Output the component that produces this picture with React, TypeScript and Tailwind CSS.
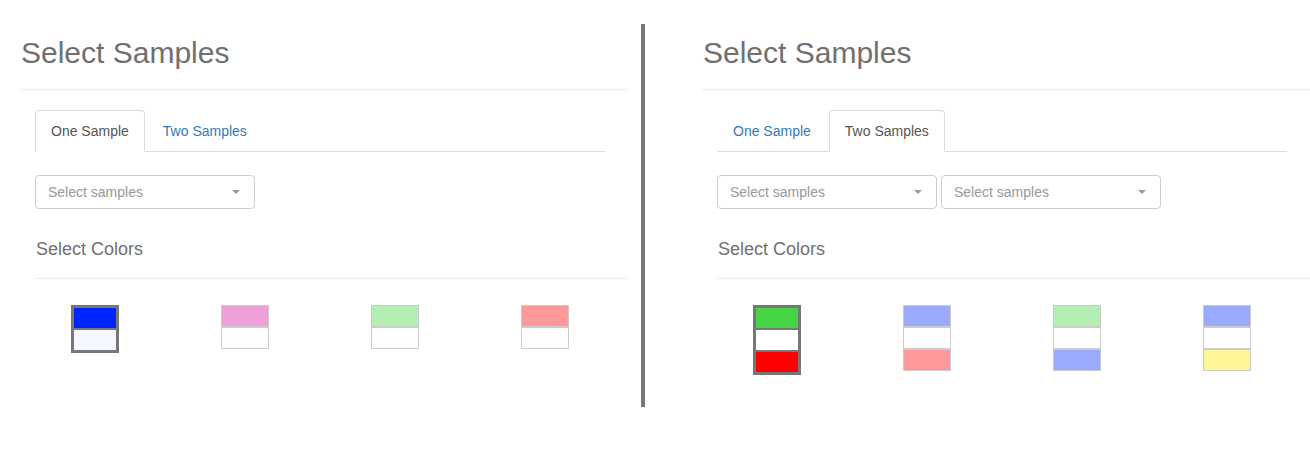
import { useState } from "react"

type Swatch = { colors: string[]; selected?: boolean }

const oneSampleSwatches: Swatch[] = [
  { colors: ["#0026ff", "#f5f7ff"], selected: true },
  { colors: ["#f0a0d8", "#fefcfe"] },
  { colors: ["#b3eeb3", "#fbfefb"] },
  { colors: ["#ff9999", "#fffcfc"] },
]

const twoSampleSwatches: Swatch[] = [
  { colors: ["#44d444", "#ffffff", "#ff0000"], selected: true },
  { colors: ["#99aaff", "#ffffff", "#ff9999"] },
  { colors: ["#b3eeb3", "#ffffff", "#99aaff"] },
  { colors: ["#99aaff", "#ffffff", "#fff599"] },
]

function SampleSelect() {
  return (
    <div className="flex h-[34px] w-[220px] items-center justify-between rounded-[4px] border border-[#ccc] bg-white pl-[12px] pr-[14px] text-[14px] text-[#999]">
      <span>Select samples</span>
      {/* caret */}
      <span className="h-0 w-0 border-x-[4px] border-t-[4px] border-x-transparent border-t-[#999]" />
    </div>
  )
}

function ColorSwatch({ swatch }: { swatch: Swatch }) {
  return (
    <div
      className={`flex w-[48px] flex-col gap-[2px] ${
        swatch.selected ? "border-[3px] border-[#777] bg-[#777]" : "border border-[#ccc] bg-[#ccc]"
      }`}
    >
      {swatch.colors.map((c, i) => (
        <div key={i} className="h-[20px]" style={{ backgroundColor: c }} />
      ))}
    </div>
  )
}

function Panel({ initialTab }: { initialTab: "one" | "two" }) {
  const [tab, setTab] = useState(initialTab)
  const swatches = tab === "one" ? oneSampleSwatches : twoSampleSwatches

  return (
    <div className="flex flex-col">
      <h2 className="ml-px mt-[36px] text-[30px] leading-[33px] text-[#707070]">Select Samples</h2>
      <div className="mt-[20px] border-t border-[#eee]" />

      {/* Tabs */}
      <ul className="ml-[15px] mt-[20px] flex w-[570px] gap-[2px] border-b border-[#ddd] text-[14px] leading-[20px]">
        {[
          { id: "one" as const, label: "One Sample" },
          { id: "two" as const, label: "Two Samples" },
        ].map((t) => (
          <li key={t.id} className="-mb-px">
            <button
              onClick={() => setTab(t.id)}
              className={`rounded-t-[4px] border px-[15px] py-[10px] ${
                tab === t.id
                  ? "border-[#ddd] border-b-transparent bg-white text-[#555]"
                  : "border-transparent text-[#337ab7]"
              }`}
            >
              {t.label}
            </button>
          </li>
        ))}
      </ul>

      <div className="ml-[15px] mt-[23px] flex gap-[4px]">
        <SampleSelect />
        {tab === "two" && <SampleSelect />}
      </div>

      <h3 className="ml-[16px] mt-[30px] text-[18px] leading-[20px] text-[#707070]">Select Colors</h3>
      <div className="ml-[15px] mt-[19px] border-t border-[#eee]" />

      <div className="mt-[26px] flex items-start">
        {swatches.map((s, i) => (
          <div key={i} className="flex w-[150px] items-start justify-center">
            <ColorSwatch swatch={s} />
          </div>
        ))}
      </div>
    </div>
  )
}

export default function App() {
  return (
    <div className="flex h-[454px] w-[1310px] overflow-hidden bg-white font-['Liberation_Sans',Arial,sans-serif]">
      <div className="ml-[20px] w-[607px] shrink-0">
        <Panel initialTab="one" />
      </div>
      <div className="ml-[14px] mt-[24px] h-[383px] w-[4px] shrink-0 bg-[#777]" />
      <div className="ml-[57px] w-[608px] shrink-0">
        <Panel initialTab="two" />
      </div>
    </div>
  )
}
